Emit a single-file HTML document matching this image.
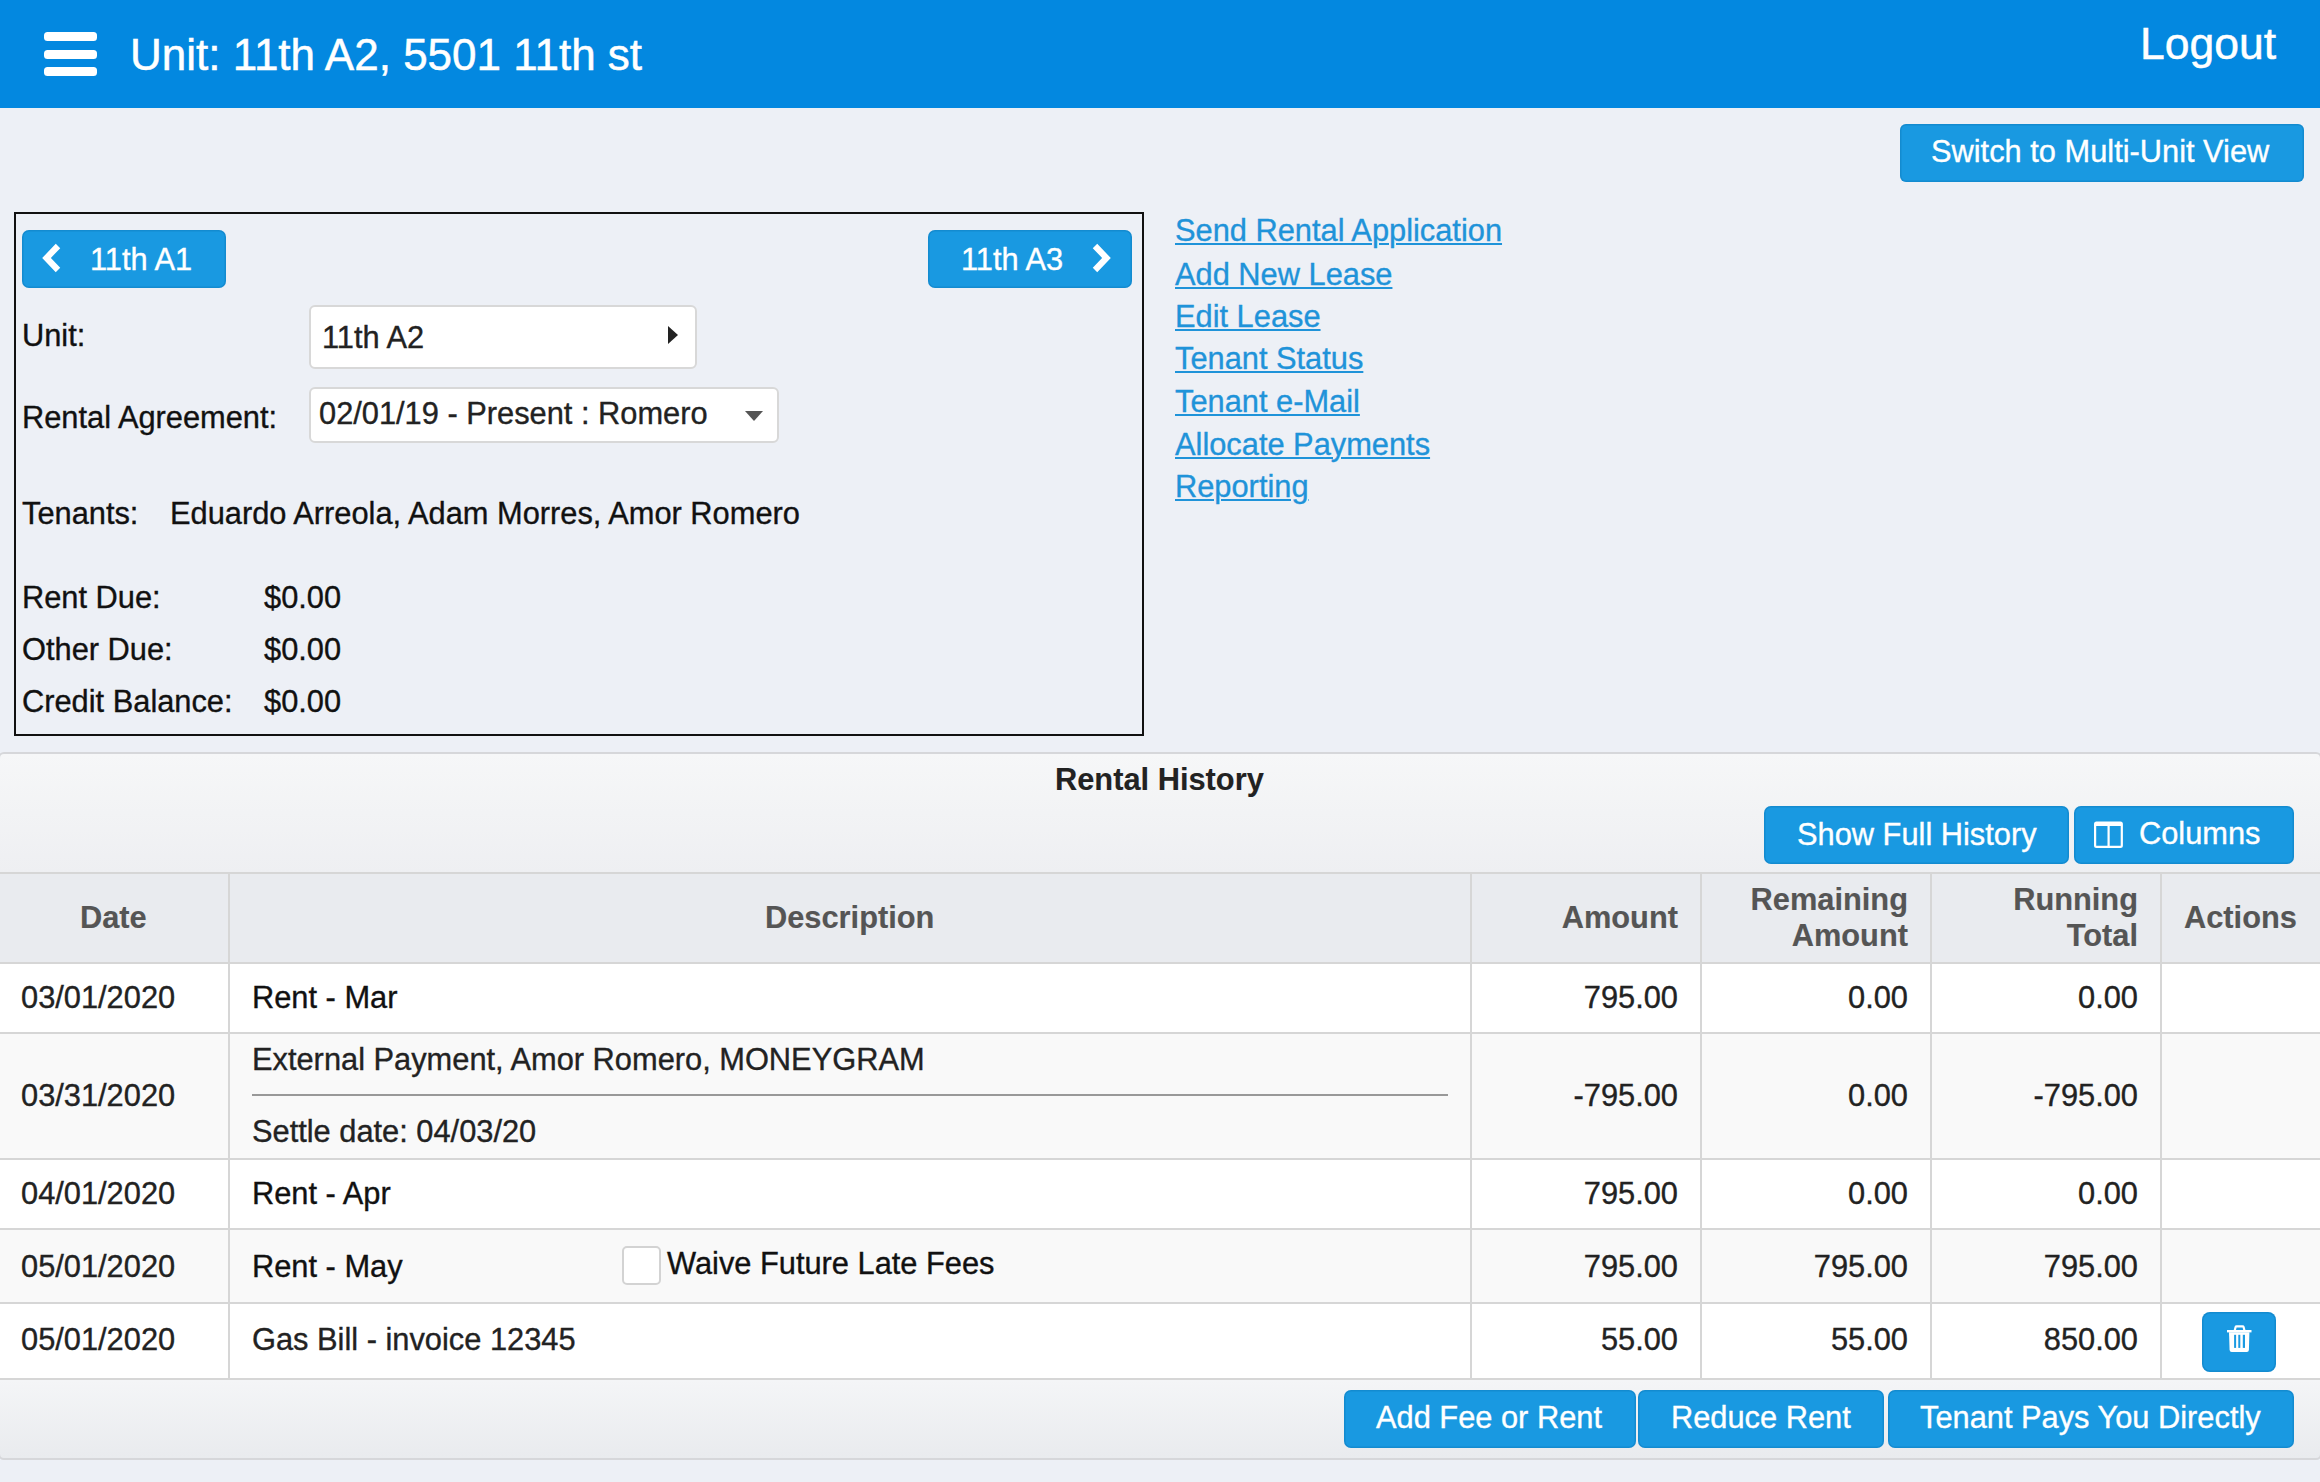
<!DOCTYPE html>
<html><head><meta charset="utf-8">
<style>
*{box-sizing:border-box;margin:0;padding:0}
html,body{width:2320px;height:1482px;overflow:hidden}
body{position:relative;background:#edf0f6;font-family:"Liberation Sans",sans-serif;color:#111}
.a{position:absolute}
.t{position:absolute;white-space:pre;line-height:1;font-size:30.8px;-webkit-text-stroke-width:0.35px;margin-top:1px}
.btn{position:absolute;background:#1999e1;border-radius:7px;box-shadow:inset 0 0 0 1.5px rgba(0,90,150,0.22)}
.w{color:#fff}
.lnk{margin-top:2px !important;color:#1f93d9;text-decoration:underline;text-decoration-thickness:2px;text-underline-offset:1.5px}
.hdr{color:#555;font-weight:bold;-webkit-text-stroke-width:0.15px}
.row{position:absolute;left:0;width:2320px}
.vl{position:absolute;width:2px;background:#d6d6d6}
.hl{position:absolute;left:0;width:2320px;height:2px;background:#d6d6d6}
</style></head>
<body>
<!-- header bar -->
<div class="a" style="left:0;top:0;width:2320px;height:108px;background:#0388e0"></div>
<div class="a" style="left:44px;top:32px;width:53px;height:9px;background:#fff;border-radius:3.5px"></div>
<div class="a" style="left:44px;top:50px;width:53px;height:9px;background:#fff;border-radius:3.5px"></div>
<div class="a" style="left:44px;top:67px;width:53px;height:9px;background:#fff;border-radius:3.5px"></div>
<div class="t w" style="left:130px;top:33px;font-size:44px;margin-top:0;-webkit-text-stroke-width:0.5px">Unit: 11th A2, 5501 11th st</div>
<div class="t w" style="left:2140px;top:22px;font-size:44.5px;margin-top:0;-webkit-text-stroke-width:0.5px">Logout</div>

<!-- switch button -->
<div class="btn" style="left:1900px;top:124px;width:404px;height:58px;border-radius:6px"></div>
<div class="t w" style="left:1931px;top:136px">Switch to Multi-Unit View</div>

<!-- unit box -->
<div class="a" style="left:14px;top:212px;width:1130px;height:524px;border:2px solid #111"></div>
<div class="btn" style="left:22px;top:230px;width:204px;height:58px"></div>
<svg class="a" style="left:38px;top:240px" width="26" height="36" viewBox="0 0 26 36"><path d="M20 6 L8.5 18 L20 30" fill="none" stroke="#fff" stroke-width="6.2" stroke-linecap="butt" stroke-linejoin="miter"/></svg>
<div class="t w" style="left:90px;top:244px">11th A1</div>
<div class="btn" style="left:928px;top:230px;width:204px;height:58px"></div>
<div class="t w" style="left:961px;top:244px">11th A3</div>
<svg class="a" style="left:1089px;top:240px" width="26" height="36" viewBox="0 0 26 36"><path d="M6 6 L17.5 18 L6 30" fill="none" stroke="#fff" stroke-width="6.2" stroke-linecap="butt" stroke-linejoin="miter"/></svg>

<div class="t" style="left:22px;top:320px">Unit:</div>
<div class="a" style="left:309px;top:305px;width:388px;height:64px;background:#fff;border:2px solid #d8d8d8;border-radius:6px"></div>
<div class="t" style="left:322px;top:322px;color:#222">11th A2</div>
<svg class="a" style="left:666px;top:325px" width="14" height="20" viewBox="0 0 14 20"><path d="M2 1 L12 10 L2 19 Z" fill="#222"/></svg>

<div class="t" style="left:22px;top:402px">Rental Agreement:</div>
<div class="a" style="left:309px;top:387px;width:470px;height:56px;background:#fff;border:2px solid #d8d8d8;border-radius:6px"></div>
<div class="t" style="left:319px;top:398px;color:#222">02/01/19 - Present : Romero</div>
<svg class="a" style="left:744px;top:410px" width="20" height="12" viewBox="0 0 20 12"><path d="M1 1 L19 1 L10 11 Z" fill="#555"/></svg>

<div class="t" style="left:22px;top:498px">Tenants:</div>
<div class="t" style="left:170px;top:498px">Eduardo Arreola, Adam Morres, Amor Romero</div>
<div class="t" style="left:22px;top:582px">Rent Due:</div>
<div class="t" style="left:264px;top:582px">$0.00</div>
<div class="t" style="left:22px;top:634px">Other Due:</div>
<div class="t" style="left:264px;top:634px">$0.00</div>
<div class="t" style="left:22px;top:686px">Credit Balance:</div>
<div class="t" style="left:264px;top:686px">$0.00</div>

<!-- links -->
<div class="t lnk" style="left:1175px;top:214px">Send Rental Application</div>
<div class="t lnk" style="left:1175px;top:258px">Add New Lease</div>
<div class="t lnk" style="left:1175px;top:300px">Edit Lease</div>
<div class="t lnk" style="left:1175px;top:342px">Tenant Status</div>
<div class="t lnk" style="left:1175px;top:385px">Tenant e-Mail</div>
<div class="t lnk" style="left:1175px;top:428px">Allocate Payments</div>
<div class="t lnk" style="left:1175px;top:470px">Reporting</div>

<!-- panel -->
<div class="a" style="left:-2px;top:752px;width:2324px;height:708px;border:2px solid #d6d7da;border-radius:6px;background:linear-gradient(#f6f7f8 0px,#eeeff2 118px,#eeeff2 626px,#f4f5f7 626px,#e9ebee 704px)"></div>
<div class="t" style="left:1055px;top:764px;font-weight:bold;color:#222;-webkit-text-stroke-width:0.1px">Rental History</div>
<div class="btn" style="left:1764px;top:806px;width:305px;height:58px"></div>
<div class="t w" style="left:1797px;top:819px">Show Full History</div>
<div class="btn" style="left:2074px;top:806px;width:220px;height:58px"></div>
<svg class="a" style="left:2092px;top:820px" width="32" height="30" viewBox="0 0 32 30"><path fill="#fff" fill-rule="evenodd" d="M4.5 1.5 H28.4 Q30.9 1.5 30.9 4 V25.6 Q30.9 28.1 28.4 28.1 H4.5 Q2 28.1 2 25.6 V4 Q2 1.5 4.5 1.5 Z M4.2 6 V25.8 H15.5 V6 Z M17.7 6 V25.8 H28.7 V6 Z"/></svg>
<div class="t w" style="left:2139px;top:818px">Columns</div>

<!-- table -->
<div class="a" style="left:0;top:872px;width:2320px;height:92px;background:#e9ebef"></div>
<div class="hl" style="top:872px"></div>
<div class="hl" style="top:962px"></div>
<div class="a" style="left:0;top:964px;width:2320px;height:68px;background:#fff"></div>
<div class="hl" style="top:1032px"></div>
<div class="a" style="left:0;top:1034px;width:2320px;height:124px;background:#f9f9f9"></div>
<div class="hl" style="top:1158px"></div>
<div class="a" style="left:0;top:1160px;width:2320px;height:68px;background:#fff"></div>
<div class="hl" style="top:1228px"></div>
<div class="a" style="left:0;top:1230px;width:2320px;height:72px;background:#f9f9f9"></div>
<div class="hl" style="top:1302px"></div>
<div class="a" style="left:0;top:1304px;width:2320px;height:74px;background:#fff"></div>
<div class="hl" style="top:1378px"></div>
<div class="vl" style="left:228px;top:872px;height:508px"></div>
<div class="vl" style="left:1470px;top:872px;height:508px"></div>
<div class="vl" style="left:1700px;top:872px;height:508px"></div>
<div class="vl" style="left:1930px;top:872px;height:508px"></div>
<div class="vl" style="left:2160px;top:872px;height:508px"></div>

<div class="t hdr" style="left:80px;top:902px">Date</div>
<div class="t hdr" style="left:765px;top:902px">Description</div>
<div class="t hdr" style="right:642px;top:902px">Amount</div>
<div class="t hdr" style="right:412px;top:884px">Remaining</div>
<div class="t hdr" style="right:412px;top:920px">Amount</div>
<div class="t hdr" style="right:182px;top:884px">Running</div>
<div class="t hdr" style="right:182px;top:920px">Total</div>
<div class="t hdr" style="left:2184px;top:902px">Actions</div>

<div class="t" style="left:21px;top:982px;color:#222">03/01/2020</div>
<div class="t" style="left:252px;top:982px;color:#111">Rent - Mar</div>
<div class="t" style="right:642px;top:982px;color:#222">795.00</div>
<div class="t" style="right:412px;top:982px;color:#222">0.00</div>
<div class="t" style="right:182px;top:982px;color:#222">0.00</div>

<div class="t" style="left:21px;top:1080px;color:#222">03/31/2020</div>
<div class="t" style="left:252px;top:1044px;color:#222">External Payment, Amor Romero, MONEYGRAM</div>
<div class="a" style="left:252px;top:1094px;width:1196px;height:2px;background:#999"></div>
<div class="t" style="left:252px;top:1116px;color:#222">Settle date: 04/03/20</div>
<div class="t" style="right:642px;top:1080px;color:#222">-795.00</div>
<div class="t" style="right:412px;top:1080px;color:#222">0.00</div>
<div class="t" style="right:182px;top:1080px;color:#222">-795.00</div>

<div class="t" style="left:21px;top:1178px;color:#222">04/01/2020</div>
<div class="t" style="left:252px;top:1178px;color:#111">Rent - Apr</div>
<div class="t" style="right:642px;top:1178px;color:#222">795.00</div>
<div class="t" style="right:412px;top:1178px;color:#222">0.00</div>
<div class="t" style="right:182px;top:1178px;color:#222">0.00</div>

<div class="t" style="left:21px;top:1251px;color:#222">05/01/2020</div>
<div class="t" style="left:252px;top:1251px;color:#111">Rent - May</div>
<div class="a" style="left:622px;top:1246px;width:39px;height:39px;background:#fff;border:2px solid #d3d3d3;border-radius:5px"></div>
<div class="t" style="left:667px;top:1248px;color:#111">Waive Future Late Fees</div>
<div class="t" style="right:642px;top:1251px;color:#222">795.00</div>
<div class="t" style="right:412px;top:1251px;color:#222">795.00</div>
<div class="t" style="right:182px;top:1251px;color:#222">795.00</div>

<div class="t" style="left:21px;top:1324px;color:#222">05/01/2020</div>
<div class="t" style="left:252px;top:1324px;color:#222">Gas Bill - invoice 12345</div>
<div class="t" style="right:642px;top:1324px;color:#222">55.00</div>
<div class="t" style="right:412px;top:1324px;color:#222">55.00</div>
<div class="t" style="right:182px;top:1324px;color:#222">850.00</div>
<div class="btn" style="left:2202px;top:1312px;width:74px;height:60px;border-radius:8px"></div>
<svg class="a" style="left:2224px;top:1323px" width="30" height="32" viewBox="0 0 30 32"><path d="M10.8 7.2 L11.6 4 Q11.8 3.4 12.6 3.4 L18.6 3.4 Q19.4 3.4 19.6 4 L20.4 7.2" fill="none" stroke="#fff" stroke-width="2.2"/><rect x="3" y="7" width="24.5" height="2.4" fill="#fff"/><path d="M5 9.2 L25.4 9.2 L24.9 27 Q24.8 29 22.8 29 L7.7 29 Q5.7 29 5.6 27 Z" fill="#fff"/><rect x="10.1" y="11.8" width="2" height="13.1" fill="#1a9ae2"/><rect x="14.3" y="11.8" width="2" height="13.1" fill="#1a9ae2"/><rect x="18.8" y="11.8" width="2.2" height="13.1" fill="#1a9ae2"/></svg>

<!-- footer buttons -->
<div class="btn" style="left:1344px;top:1390px;width:292px;height:58px"></div>
<div class="t w" style="left:1376px;top:1402px">Add Fee or Rent</div>
<div class="btn" style="left:1638px;top:1390px;width:246px;height:58px"></div>
<div class="t w" style="left:1671px;top:1402px">Reduce Rent</div>
<div class="btn" style="left:1888px;top:1390px;width:406px;height:58px"></div>
<div class="t w" style="left:1920px;top:1402px">Tenant Pays You Directly</div>
</body></html>
